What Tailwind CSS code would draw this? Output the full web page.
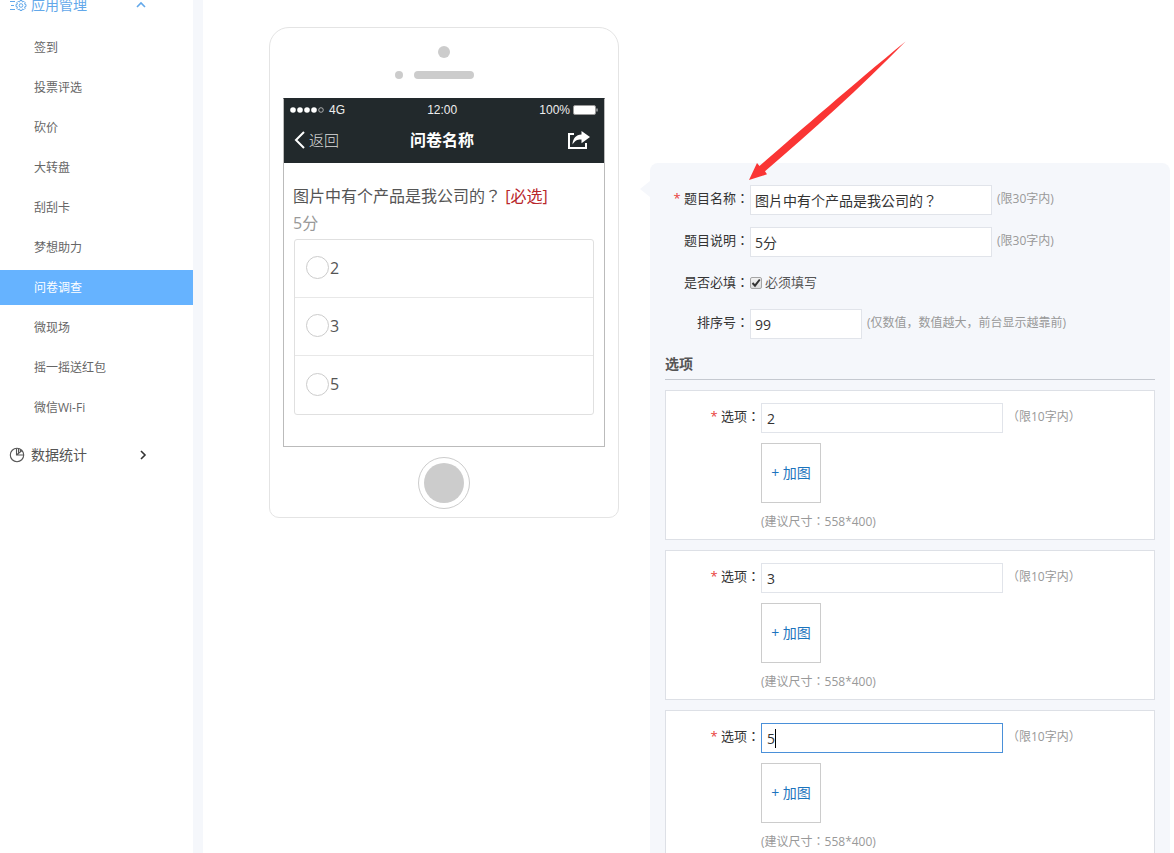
<!DOCTYPE html>
<html lang="zh-CN">
<head>
<meta charset="utf-8">
<meta name="viewport" content="width=device-width, initial-scale=1">
<title>问卷调查</title>
<script src="https://cdn.jsdelivr.net/npm/@tailwindcss/browser@4"></script>
</head>
<body class="bg-white font-['Open_Sans','Noto_Sans_CJK_SC',sans-serif] text-[#333]">
<div class="flex h-screen overflow-hidden">

  <!-- Sidebar -->
  <nav class="w-[203px] shrink-0 border-r-10 border-[#f5f7fb] text-xs text-[#666]">
    <button type="button" class="-mt-[15px] mb-[5px] flex h-10 w-full items-center pl-[10px] text-sm leading-none text-[#62a8ea]">
      <svg class="mr-1 h-4 w-[17px]" viewBox="0 0 17 16" fill="none" stroke="currentColor" stroke-width="1">
        <path d="M0 4.5h5M1 8.5h3M0 12.5h5"/>
        <circle cx="11" cy="8.5" r="1.8"/>
        <path d="M10 3.5h2l.4 1.5 1.4-.7 1.4 1.4-.7 1.4 1.5.4v2l-1.5.4.7 1.4-1.4 1.4-1.4-.7-.4 1.5h-2l-.4-1.5-1.4.7-1.4-1.4.7-1.4L6 9.500v-2l1.500-.4-.7-1.400 1.400-1.400 1.400.7z"/>
      </svg>
      <span>应用管理</span>
      <svg class="ml-auto mr-[47px] h-[10px] w-[10px]" viewBox="0 0 10 10" fill="none" stroke="currentColor" stroke-width="1.6"><path d="M1 7l4-4 4 4"/></svg>
    </button>
    <ul class="flex flex-col gap-[5px]">
      <li><a href="#" class="flex h-[35px] items-center pl-[34px]">签到</a></li>
      <li><a href="#" class="flex h-[35px] items-center pl-[34px]">投票评选</a></li>
      <li><a href="#" class="flex h-[35px] items-center pl-[34px]">砍价</a></li>
      <li><a href="#" class="flex h-[35px] items-center pl-[34px]">大转盘</a></li>
      <li><a href="#" class="flex h-[35px] items-center pl-[34px]">刮刮卡</a></li>
      <li><a href="#" class="flex h-[35px] items-center pl-[34px]">梦想助力</a></li>
      <li><a href="#" aria-current="page" class="flex h-[35px] items-center bg-[#66b3ff] pl-[34px] text-white">问卷调查</a></li>
      <li><a href="#" class="flex h-[35px] items-center pl-[34px]">微现场</a></li>
      <li><a href="#" class="flex h-[35px] items-center pl-[34px]">摇一摇送红包</a></li>
      <li><a href="#" class="flex h-[35px] items-center pl-[34px]">微信Wi-Fi</a></li>
    </ul>
    <button type="button" class="mt-[10px] flex h-10 w-full items-center pl-[9px] text-sm text-[#555]">
      <svg class="mr-[6px] h-4 w-4" viewBox="0 0 16 16" fill="none" stroke="currentColor" stroke-width="1.1">
        <circle cx="8" cy="8" r="6.700"/>
        <path d="M7.500 1.500V8h7M7.500 8l5.500-4.500M9.500 2v3.500M11.300 2.600v1.600"/>
      </svg>
      <span>数据统计</span>
      <svg class="ml-auto mr-[45px] h-[10px] w-[10px]" viewBox="0 0 10 10" fill="none" stroke="#333" stroke-width="1.600"><path d="M3 1l4 4-4 4"/></svg>
    </button>
  </nav>

  <main class="flex min-w-0 flex-1 items-start gap-[31px] overflow-y-auto pl-[66px] pr-1 [scrollbar-width:none]">

    <!-- Phone preview -->
    <section class="mt-[27px] flex w-[350px] shrink-0 flex-col items-center rounded-t-[20px] rounded-b-[10px] border border-[#e4e4e4] pb-2">
      <div class="mt-[18px] h-3 w-3 rounded-full bg-[#ccc]"></div>
      <div class="mt-[13px] flex justify-center gap-[11px]">
        <span class="h-2 w-2 rounded-full bg-[#ccc]"></span>
        <span class="h-2 w-[60px] rounded-full bg-[#ccc]"></span>
        <span class="h-2 w-2"></span>
      </div>
      <div class="mt-[19px] w-[322px] border border-[#bbb] border-t-[#22292c] pb-[31px]">
        <header class="bg-[#22292c] pb-1 text-white">
          <div class="flex h-[22px] items-center justify-between px-[6px] font-['Liberation_Sans',sans-serif] text-xs text-[#eee]">
            <div class="flex items-center gap-[5px]">
              <svg class="h-[6px] w-[34px]" viewBox="0 0 34 6" fill="#fff"><circle cx="3" cy="3" r="2.800"/><circle cx="10" cy="3" r="2.800"/><circle cx="17" cy="3" r="2.800"/><circle cx="24" cy="3" r="2.800"/><circle cx="31" cy="3" r="2.300" fill="none" stroke="#ccc" stroke-width=".8"/></svg>
              <span>4G</span>
            </div>
            <span>12:00</span>
            <div class="flex items-center gap-[3px]">
              <span>100%</span>
              <svg class="h-[10px] w-[25px]" viewBox="0 0 25 10"><rect x=".5" y=".5" width="22" height="9" rx="1.500" fill="#fff" stroke="#999"/><path d="M23.500 3.500h1v3h-1z" fill="#ddd"/></svg>
            </div>
          </div>
          <div class="grid h-[38px] grid-cols-[1fr_auto_1fr] items-center pr-[14px] pl-[10px]">
            <button type="button" class="flex items-center gap-1 text-[15px] font-light text-[#ddd]">
              <svg class="h-[18px] w-[11px]" viewBox="0 0 11 18" fill="none" stroke="#fff" stroke-width="2"><path d="M10 1L2 9l8 8"/></svg>返回
            </button>
            <h1 class="text-base font-bold">问卷名称</h1>
            <button type="button" aria-label="分享" class="justify-self-end">
              <svg class="h-5 w-[23px]" viewBox="0 0 23 20"><path d="M7 4H2v14h17v-5" fill="none" stroke="#fff" stroke-width="2"/><path d="M14.500 1L23 7l-8.500 6.200V9.500C10.500 9.300 8 10.500 5.500 14.500 5.800 8.500 9 5 14.500 4.600z" fill="#fff"/></svg>
            </button>
          </div>
        </header>
        <div class="px-[10px] pt-5">
          <p class="-ml-px text-base leading-[27px] text-[#555]">图片中有个产品是我公司的<span lang="zh-TW" class="font-['Noto_Sans_CJK_TC',sans-serif] leading-none">？</span> <span class="text-[#b8262b]">[必选]</span></p>
          <p class="-ml-px text-base leading-[27px] text-[#999]">5分</p>
          <div class="mt-[2px] divide-y divide-[#e8e8e8] rounded-[3px] border border-[#e0e0e0] text-base text-[#555]">
            <label class="flex h-[58px] items-center gap-px pb-[2px] pl-[11px]"><input type="radio" name="q" class="h-[23px] w-[23px] appearance-none rounded-full border border-[#ccc] bg-white">2</label>
            <label class="flex h-[58px] items-center gap-px pb-[2px] pl-[11px]"><input type="radio" name="q" class="h-[23px] w-[23px] appearance-none rounded-full border border-[#ccc] bg-white">3</label>
            <label class="flex h-[58px] items-center gap-px pb-[2px] pl-[11px]"><input type="radio" name="q" class="h-[23px] w-[23px] appearance-none rounded-full border border-[#ccc] bg-white">5</label>
          </div>
        </div>
      </div>
      <div class="mt-[10px] flex h-[52px] w-[52px] items-center justify-center rounded-full border border-[#ccc]">
        <div class="h-10 w-10 rounded-full bg-[#ccc]"></div>
      </div>
    </section>

    <!-- Question editor -->
    <form class="relative mt-[163px] min-w-0 flex-1 rounded-[8px] bg-[#f5f7fb] px-[15px] pt-[22px] pb-4 text-[13px]">
      <svg class="absolute top-[18px] -left-[10px] h-4 w-[10px]" viewBox="0 0 10 16"><path d="M10 0v16L0 8z" fill="#f5f7fb"/></svg>
      <svg class="pointer-events-none absolute -top-[125px] left-[95px] h-[145px] w-[165px]" viewBox="745 38 165 145"><path d="M749 180l8-17 2.500 3C800 131 850 87 905.500 41.500 860 88 812 131 765 171.300l2 3z" fill="#fa3534"/></svg>

      <div class="flex items-start gap-[5px]">
        <div class="flex items-start gap-px">
          <label for="title" class="w-[84px] text-right leading-[25px]"><span class="text-[#e8403a]">*</span> 题目名称<span lang="zh-TW" class="font-['Noto_Sans_CJK_TC',sans-serif]">：</span></label>
          <input id="title" type="text" lang="zh-TW" value="图片中有个产品是我公司的？" class="h-[30px] w-[242px] border border-[#e1e4ea] bg-white px-1 font-['Open_Sans','Noto_Sans_CJK_TC',sans-serif] text-sm">
        </div>
        <span class="text-xs leading-[27px] text-[#999]">(限30字内)</span>
      </div>
      <div class="mt-3 flex items-start gap-[5px]">
        <div class="flex items-start gap-px">
          <label for="desc" class="w-[84px] text-right leading-[25px]">题目说明<span lang="zh-TW" class="font-['Noto_Sans_CJK_TC',sans-serif]">：</span></label>
          <input id="desc" type="text" value="5分" class="h-[30px] w-[242px] border border-[#e1e4ea] bg-white px-1 text-sm">
        </div>
        <span class="text-xs leading-[27px] text-[#999]">(限30字内)</span>
      </div>
      <div class="mt-3 flex h-[27px] items-center gap-px">
        <span class="w-[84px] text-right">是否必填<span lang="zh-TW" class="font-['Noto_Sans_CJK_TC',sans-serif]">：</span></span>
        <label class="flex items-center gap-[3px] text-[#555]">
          <span class="relative flex">
            <input type="checkbox" checked class="h-3 w-3 appearance-none rounded-[2px] border border-[#a5a5a5] bg-linear-to-b from-[#f2f2f2] to-[#dcdcdc]">
            <svg class="pointer-events-none absolute inset-0 h-3 w-3" viewBox="0 0 12 12" fill="none" stroke="#333" stroke-width="2"><path d="M2.500 6l2.500 2.700L9.800 2.500"/></svg>
          </span>必须填写
        </label>
      </div>
      <div class="mt-[13px] flex items-start gap-[5px]">
        <div class="flex items-start gap-px">
          <label for="sort" class="w-[84px] text-right leading-[25px]">排序号<span lang="zh-TW" class="font-['Noto_Sans_CJK_TC',sans-serif]">：</span></label>
          <input id="sort" type="text" value="99" class="h-[30px] w-[112px] border border-[#e1e4ea] bg-white px-1 text-sm">
        </div>
        <span class="text-xs leading-[27px] text-[#999]">(仅数值，数值越大，前台显示越靠前)</span>
      </div>

      <h2 class="mt-[10px] border-b border-[#c5c9d0] text-sm leading-[30px] font-bold text-[#555]">选项</h2>

      <div class="mt-[10px] flex flex-col gap-[10px]">
        <fieldset class="border border-[#dde0e6] bg-white pt-3 pb-2">
          <div class="flex items-start gap-1">
            <div class="flex items-start gap-px">
              <label for="opt1" class="w-[94px] text-right leading-[25px]"><span class="text-[#e8403a]">*</span> 选项<span lang="zh-TW" class="font-['Noto_Sans_CJK_TC',sans-serif]">：</span></label>
              <input id="opt1" type="text" value="2" class="h-[30px] w-[242px] border border-[#e1e4ea] bg-white px-[5px] text-sm">
            </div>
            <span lang="zh-TW" class="font-['Open_Sans','Noto_Sans_CJK_TC',sans-serif] text-xs leading-[27px] text-[#999]">（限10字内）</span>
          </div>
          <div class="mt-[10px] ml-[95px]">
            <button type="button" class="flex h-[60px] w-[60px] items-center justify-center border border-[#ccc] text-sm text-[#1b74bd]">+ 加图</button>
            <p class="mt-2 text-xs leading-[19px] text-[#999]">(建议尺寸<span lang="zh-TW" class="font-['Noto_Sans_CJK_TC',sans-serif]">：</span>558*400)</p>
          </div>
        </fieldset>
        <fieldset class="border border-[#dde0e6] bg-white pt-3 pb-2">
          <div class="flex items-start gap-1">
            <div class="flex items-start gap-px">
              <label for="opt2" class="w-[94px] text-right leading-[25px]"><span class="text-[#e8403a]">*</span> 选项<span lang="zh-TW" class="font-['Noto_Sans_CJK_TC',sans-serif]">：</span></label>
              <input id="opt2" type="text" value="3" class="h-[30px] w-[242px] border border-[#e1e4ea] bg-white px-[5px] text-sm">
            </div>
            <span lang="zh-TW" class="font-['Open_Sans','Noto_Sans_CJK_TC',sans-serif] text-xs leading-[27px] text-[#999]">（限10字内）</span>
          </div>
          <div class="mt-[10px] ml-[95px]">
            <button type="button" class="flex h-[60px] w-[60px] items-center justify-center border border-[#ccc] text-sm text-[#1b74bd]">+ 加图</button>
            <p class="mt-2 text-xs leading-[19px] text-[#999]">(建议尺寸<span lang="zh-TW" class="font-['Noto_Sans_CJK_TC',sans-serif]">：</span>558*400)</p>
          </div>
        </fieldset>
        <fieldset class="border border-[#dde0e6] bg-white pt-3 pb-2">
          <div class="flex items-start gap-1">
            <div class="flex items-start gap-px">
              <label for="opt3" class="w-[94px] text-right leading-[25px]"><span class="text-[#e8403a]">*</span> 选项<span lang="zh-TW" class="font-['Noto_Sans_CJK_TC',sans-serif]">：</span></label>
              <span class="relative flex">
                <input id="opt3" type="text" value="5" class="h-[30px] w-[242px] border border-[#4a90d9] bg-white px-[5px] text-sm">
                <span class="pointer-events-none absolute top-[6px] left-[14px] h-[19px] w-px bg-black"></span>
              </span>
            </div>
            <span lang="zh-TW" class="font-['Open_Sans','Noto_Sans_CJK_TC',sans-serif] text-xs leading-[27px] text-[#999]">（限10字内）</span>
          </div>
          <div class="mt-[10px] ml-[95px]">
            <button type="button" class="flex h-[60px] w-[60px] items-center justify-center border border-[#ccc] text-sm text-[#1b74bd]">+ 加图</button>
            <p class="mt-2 text-xs leading-[19px] text-[#999]">(建议尺寸<span lang="zh-TW" class="font-['Noto_Sans_CJK_TC',sans-serif]">：</span>558*400)</p>
          </div>
        </fieldset>
      </div>
    </form>
  </main>
</div>
</body>
</html>
